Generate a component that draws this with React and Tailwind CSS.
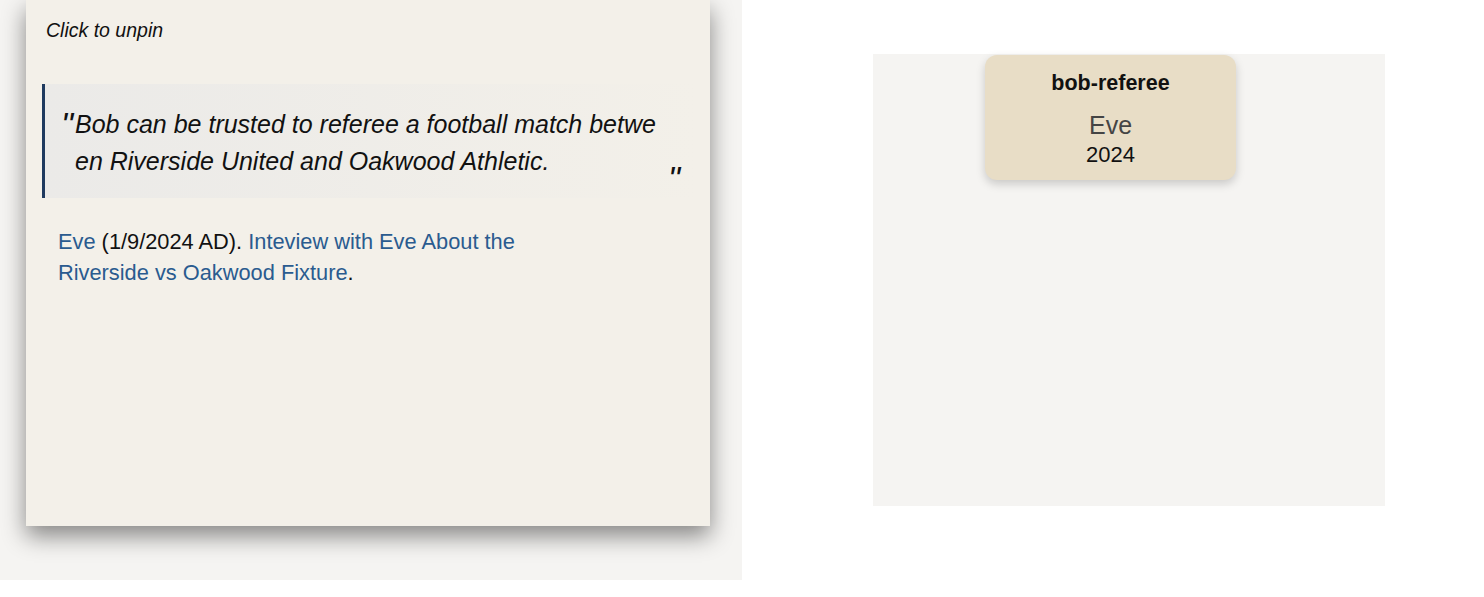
import React from "react";

const QuotePanel = () => {
  return (
    <div className="w-[684px] h-[526px] ml-[26px] bg-[#f3f0e9] shadow-[0_10px_22px_rgba(0,0,0,0.45)] px-5 pt-[18px]">
      <p className="italic text-[19.5px] leading-6 text-[#111]">Click to unpin</p>

      <blockquote className="mt-[42px] -ml-1 w-[653px] border-l-[3px] border-[#1f3a5f] bg-gradient-to-r from-[#ebeae8] to-[#f3f0e9] pt-[22px] pb-[18px] pl-4 pr-[15px] flex">
        <span className="text-[34px] leading-[37px] italic text-[#111] w-[14px] shrink-0">"</span>
        <p className="italic text-[25px] leading-[37px] text-[#111] break-all w-[587px] shrink-0">
          Bob can be trusted to referee a football match between Riverside United and Oakwood Athletic.
        </p>
        <span className="self-end -mb-[14px] text-[34px] leading-[32px] italic text-[#111] ml-auto">"</span>
      </blockquote>

      <p className="mt-7 ml-3 max-w-[500px] text-[21.8px] leading-[31px] text-[#111]">
        <a className="text-[#2a5b8f]">Eve</a> (1/9/2024 AD).{" "}
        <a className="text-[#2a5b8f]">Inteview with Eve About the Riverside vs Oakwood Fixture</a>.
      </p>
    </div>
  );
};

const NodeCard = () => {
  return (
    <div className="w-[251px] h-[125px] ml-[112px] mt-px rounded-xl bg-[#e8ddc6] shadow-[0_4px_10px_rgba(0,0,0,0.18)] flex flex-col items-center pt-[14px]">
      <p className="font-bold text-[21.5px] leading-7 text-[#111]">bob-referee</p>
      <p className="mt-[14px] text-[25px] leading-7 text-[#444]">Eve</p>
      <p className="mt-[2px] text-[22px] leading-7 text-[#111]">2024</p>
    </div>
  );
};

export default function App() {
  return (
    <div
      className="flex bg-white w-[1484px] h-[597px]"
      style={{ fontFamily: '"Liberation Sans", Arial, sans-serif' }}
    >
      <div className="w-[742px] h-[580px] bg-[#f5f4f2]">
        <QuotePanel />
      </div>
      <div className="ml-[131px] mt-[54px] w-[512px] h-[452px] bg-[#f5f4f2]">
        <NodeCard />
      </div>
    </div>
  );
}
